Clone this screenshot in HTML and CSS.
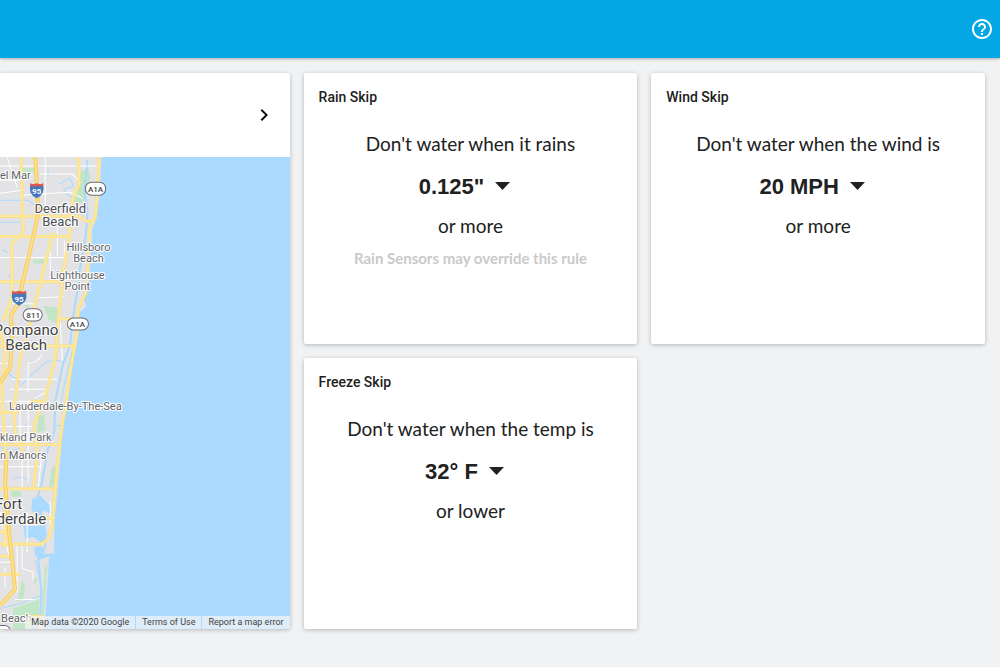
FILE: index.html
```html
<!DOCTYPE html>
<html lang="en">
<head>
    <meta charset="UTF-8">
    <meta name="viewport" content="width=device-width, initial-scale=1.0">
    <title>Weather Skips</title>
    <link rel="stylesheet" href="styles.css">
</head>
<body>

<header class="topbar">
    <button class="icon-button" type="button" aria-label="Help">
        <svg width="24" height="24" viewBox="0 0 24 24" fill="#fff">
            <path d="M11 18h2v-2h-2v2zm1-16C6.480 2 2 6.480 2 12s4.480 10 10 10 10-4.480 10-10S17.520 2 12 2zm0 18c-4.410 0-8-3.590-8-8s3.590-8 8-8 8 3.590 8 8-3.590 8-8 8zm0-14c-2.210 0-4 1.790-4 4h2c0-1.100.9-2 2-2s2 .9 2 2c0 2-3 1.750-3 5h2c0-2.250 3-2.500 3-5 0-2.210-1.790-4-4-4z"/>
        </svg>
    </button>
</header>

<main class="cards">
    <section class="card map-card">
        <div class="map-header">
            <button class="icon-button" type="button" aria-label="Change location">
                <svg width="24" height="24" viewBox="0 0 24 24" fill="#111">
                    <path d="M10 6L8.590 7.410 13.170 12l-4.580 4.590L10 18l6-6z"/>
                </svg>
            </button>
        </div>
        <div class="map">
            <svg class="map-canvas" viewBox="0 157 288 472" preserveAspectRatio="xMinYMin slice">
                <!-- land -->
                <path class="land" d="M0 157H101L99 195 96 218 92 228 91 250 89 275 86 292 83 298 86 305 79 312 78 332 74 348 70 375 66 400 62 432 59 470 56 500 54 520 54 551 38 552 38 558 49 554 47 585 44 630H0z"/>
                <path class="park" d="M80 172l8-4 2 10-4 8-1 12-6 6-6-3 5-14zM22 168h14v4H22zM33 259h11v4H33zM43 305l14 2-1 15-7-3zM24 303l5 2-2 5zM38 415l6-3 1 17-8 2zM51 467l4-3-1 20-5 2zM11 489h10v6H11zM22 578l3 5-2 14-6 2zM33 577l4-2-2 8zM45 563l2 1-4 50-2 0zM13 606l26-9-1 33H13z"/>

                <!-- inland water -->
                <path class="canal" d="M87 160L84 192 87 210 86 228 83 250 79 270 77 290 72 320 70 343 63 362 58 385 55 400 54 430 47 450 42 480 36 500 44 520 45 545 38 555 41 590 40 612 33 626"/>
                <path class="canal thin" d="M0 200H28L34 204M0 222H22M48 170v6M59 184l10-6 4 8-10 3 4 6 5 2M2 249l6 3M8 275l4 4M20 385L33 372 46 361 56 359 66 361M20 381L8 372M56 424h8M0 446l12 3 8-2M25 425l4-6M13 477l9-2 8 4M72 350l-7 28-4 22M0 606l20-5 20-8M30 530l8-6 2 10M22 515l-2 10M40 580l-5-22"/>
                <path class="lagoon" d="M32 497l8-3 10 10v8l-6-4-5 6-8-6zM23 524h21l3 8-5 9-9-6-8 2zM34 545l7-1 4 6-10 5z"/>

                <!-- streets -->
                <path class="street" d="M0 166H98M0 180H20M20 195L70 192 82 198M45 157V212M7 157l10 30M40 174h32l8 8M0 257H66M50 250v30M57 216v40M64 240v18M0 193l22-3M12 303h22M38 297l26-1M0 362h12M28 361v30M28 363l8-3 6-6M12 378h45M10 388h40M60 322l2 38M0 400h40M0 425h32M28 400v80M20 400v45M0 465h40M42 450l-4 35M22 455v32M22 540v26l11 4v8M27 510v40M0 560h13M0 510l9 45M15 597h20M5 565v20M50 500v30M4 520h18M17 540v50M47 390l-12 7"/>

                <!-- main roads -->
                <path class="road-edge" d="M21 157L23 232 12 243 12 297 3 320M78 157L79 183 72 200 69 237 63 270 58 320 55 357 44 400 34 422 37 453 33 487M53 232L43 270 28 330 20 357 15 400M13 400L15 430 24 455M99 157L95 216 89 228 87 280 85 293 78 307 77 330 70 370 66 400 62 423 57 463 54 500 52 523 48 537 41 542 0 542M0 216H78L86 221 92 221M0 236H69M0 281H60M57 318H76M0 345H73M0 411L18 411M0 443H60M0 487H55M0 530H8M0 554H12M0 572H20M24 614H41V620M39 516H52M30 400L44 400M0 330L5 350 2 390 5 440 5 545"/>
                <path class="road" d="M21 157L23 232 12 243 12 297 3 320M78 157L79 183 72 200 69 237 63 270 58 320 55 357 44 400 34 422 37 453 33 487M53 232L43 270 28 330 20 357 15 400M13 400L15 430 24 455M99 157L95 216 89 228 87 280 85 293 78 307 77 330 70 370 66 400 62 423 57 463 54 500 52 523 48 537 41 542 0 542M0 216H78L86 221 92 221M0 236H69M0 281H60M57 318H76M0 345H73M0 411L18 411M0 443H60M0 487H55M0 530H8M0 554H12M0 572H20M24 614H41V620M39 516H52M30 400L44 400M0 330L5 350 2 390 5 440 5 545"/>
                <path class="highway-edge" d="M35 157L37 190 38 213 30 250 24 275 18 303 11 314 12 340 10 367 0 381M7 450L5 480 9 530 12 557 15 587 0 603"/>
                <path class="highway" d="M35 157L37 190 38 213 30 250 24 275 18 303 11 314 12 340 10 367 0 381M7 450L5 480 9 530 12 557 15 587 0 603"/>
                <path class="seam" d="M221 157V617"/>

                <!-- route shields -->
                <g class="interstate">
                    <path class="shield" d="M30 185Q28 194 36.500 198 45 194 43 185z"/>
                    <path class="shield-top" d="M30 186V183l3 1 3.500-1 3.500 1 3-1v3z"/>
                    <text x="36.500" y="194">95</text>
                    <path class="shield" d="M12 292Q10 301 19 305 28 301 26 292z"/>
                    <path class="shield-top" d="M12 293V290l3 1 4-1 4 1 3-1v3z"/>
                    <text x="19" y="301">95</text>
                </g>
                <g class="route">
                    <rect x="85" y="182" width="20" height="13" rx="6"/>
                    <text x="95" y="192">A1A</text>
                    <rect x="23" y="308" width="19" height="12" rx="6"/>
                    <text x="33" y="317">811</text>
                    <rect x="67" y="317" width="21" height="12" rx="6"/>
                    <text x="77" y="326">A1A</text>
                    <rect x="-6" y="623" width="16" height="12" rx="5"/>
                </g>

                <!-- place names -->
                <g class="place">
                    <text x="0" y="179" class="start">el Mar</text>
                    <text x="88" y="250">Hillsboro</text>
                    <text x="88" y="261">Beach</text>
                    <text x="77" y="278">Lighthouse</text>
                    <text x="77" y="289">Point</text>
                    <text x="65" y="409">Lauderdale-By-The-Sea</text>
                    <text x="0" y="439" class="start">kland Park</text>
                    <text x="0" y="457" class="start">n Manors</text>
                    <text x="1" y="619" class="start">Beach</text>
                </g>
                <g class="place town">
                    <text x="60" y="213">Deerfield</text>
                    <text x="60" y="226">Beach</text>
                </g>
                <g class="place city">
                    <text x="58" y="334" class="end">Pompano</text>
                    <text x="26" y="349">Beach</text>
                    <text x="22" y="507" class="end">Fort</text>
                    <text x="46" y="522" class="end">derdale</text>
                </g>
            </svg>
            <div class="attribution">
                <span>Map data ©2020 Google</span>
                <a href="#">Terms of Use</a>
                <a href="#">Report a map error</a>
            </div>
        </div>
    </section>

    <section class="card">
        <h2>Rain Skip</h2>
        <div class="rule">
            <label for="rain">Don't water when it rains</label>
            <select id="rain">
                <option selected>0.125"</option>
                <option>0.25"</option>
                <option>0.5"</option>
            </select>
            <p>or more</p>
            <p class="note">Rain Sensors may override this rule</p>
        </div>
    </section>

    <section class="card">
        <h2>Wind Skip</h2>
        <div class="rule">
            <label for="wind">Don't water when the wind is</label>
            <select id="wind">
                <option>15 MPH</option>
                <option selected>20 MPH</option>
                <option>25 MPH</option>
            </select>
            <p>or more</p>
        </div>
    </section>

    <section class="card">
        <h2>Freeze Skip</h2>
        <div class="rule">
            <label for="freeze">Don't water when the temp is</label>
            <select id="freeze">
                <option selected>32° F</option>
                <option>35° F</option>
                <option>38° F</option>
            </select>
            <p>or lower</p>
        </div>
    </section>
</main>

</body>
</html>
```

FILE: styles.css
```css
* {
    box-sizing: border-box;
}

body {
    margin: 0;
    background-color: #f1f2f4;
    font-family: Roboto, Arial, sans-serif;
    color: #212121;
}

.topbar {
    display: flex;
    justify-content: flex-end;
    align-items: center;
    height: 58px;
    padding: 0 6px;
    background-color: #02a7e4;
    box-shadow: 0 1px 3px rgba(0, 0, 0, 0.3);
}

.icon-button {
    display: flex;
    padding: 0;
    border: none;
    background: none;
    cursor: pointer;
}

.cards {
    display: grid;
    grid-template-columns: 289fr 333fr 333fr;
    grid-auto-rows: minmax(271px, auto);
    gap: 14px;
    padding: 15px 15px 15px 0;
}

.card {
    padding: 15px;
    background-color: #fff;
    border-radius: 2px;
    box-shadow: 0 1px 4px rgba(0, 0, 0, 0.25);
}

.card h2 {
    margin: 0;
    font-size: 14px;
    font-weight: 500;
    line-height: 18px;
}

/* skip rules */
.rule {
    display: flex;
    flex-direction: column;
    align-items: center;
    padding-top: 26px;
    font-family: Lato, sans-serif;
    font-size: 19px;
    line-height: 24px;
}

.rule p {
    margin: 0;
}

.rule .note {
    margin-top: 8px;
    font-size: 15px;
    font-weight: bold;
    color: #cacaca;
}

.rule select {
    appearance: none;
    field-sizing: content;
    height: 34px;
    margin: 13px 0 11px;
    padding: 0 38px 0 0;
    border: none;
    background: url("data:image/svg+xml,%3Csvg xmlns='http://www.w3.org/2000/svg' width='15' height='8'%3E%3Cpath d='M0 0h15L7.5 8z' fill='%23212121'/%3E%3C/svg%3E") no-repeat right 12px center;
    font-family: "Liberation Sans", Arial, sans-serif;
    font-size: 22px;
    font-weight: bold;
    color: #212121;
    cursor: pointer;
}

/* map */
.map-card {
    grid-row: span 2;
    display: flex;
    flex-direction: column;
    padding: 0;
    overflow: hidden;
}

.map-header {
    display: flex;
    justify-content: flex-end;
    align-items: center;
    height: 84px;
    padding-right: 14px;
}

.map {
    position: relative;
    flex: 1;
    overflow: hidden;
    background-color: #aadaff;
}

.map-canvas {
    position: absolute;
    width: 100%;
    height: 100%;
}

.map-canvas path {
    fill: none;
}

.map-canvas .land {
    fill: #e3e3e5;
}

.map-canvas .park {
    fill: #c0e6c5;
}

.map-canvas .lagoon {
    fill: #aadaff;
}

.canal {
    stroke: #aadaff;
    stroke-width: 2;
}

.canal.thin {
    stroke-width: 1;
}

.street {
    stroke: #fff;
    stroke-width: 1;
}

.road-edge {
    stroke: #f8dc83;
    stroke-width: 3;
}

.road {
    stroke: #ffe896;
    stroke-width: 2;
}

.highway-edge {
    stroke: #f5cd62;
    stroke-width: 4;
}

.highway {
    stroke: #ffe089;
    stroke-width: 2;
}

.seam {
    stroke: #b1dcfa;
    stroke-width: 1;
}

.place text {
    fill: #5f6368;
    stroke: #fff;
    stroke-width: 2;
    stroke-linejoin: round;
    paint-order: stroke;
    font-size: 11px;
    text-anchor: middle;
}

.place.town text {
    fill: #4b4e52;
    font-size: 13px;
}

.place.city text {
    fill: #404347;
    font-size: 15px;
}

.place text.start {
    text-anchor: start;
}

.place.city text.end {
    text-anchor: end;
}

.route rect {
    fill: #fff;
    stroke: #6b6e72;
}

.route text,
.interstate text {
    font-size: 8px;
    font-weight: 500;
    text-anchor: middle;
    fill: #44474b;
}

.interstate text {
    font-weight: bold;
    fill: #fff;
}

.map-canvas .shield {
    fill: #4478bd;
}

.map-canvas .shield-top {
    fill: #e0564a;
}

.attribution {
    position: absolute;
    right: 0;
    bottom: 0;
    display: flex;
    gap: 1px;
    font-size: 9px;
    line-height: 13px;
    white-space: nowrap;
}

.attribution span,
.attribution a {
    padding: 0 6px;
    background-color: rgba(245, 245, 245, 0.7);
    color: #444;
    text-decoration: none;
}
```
